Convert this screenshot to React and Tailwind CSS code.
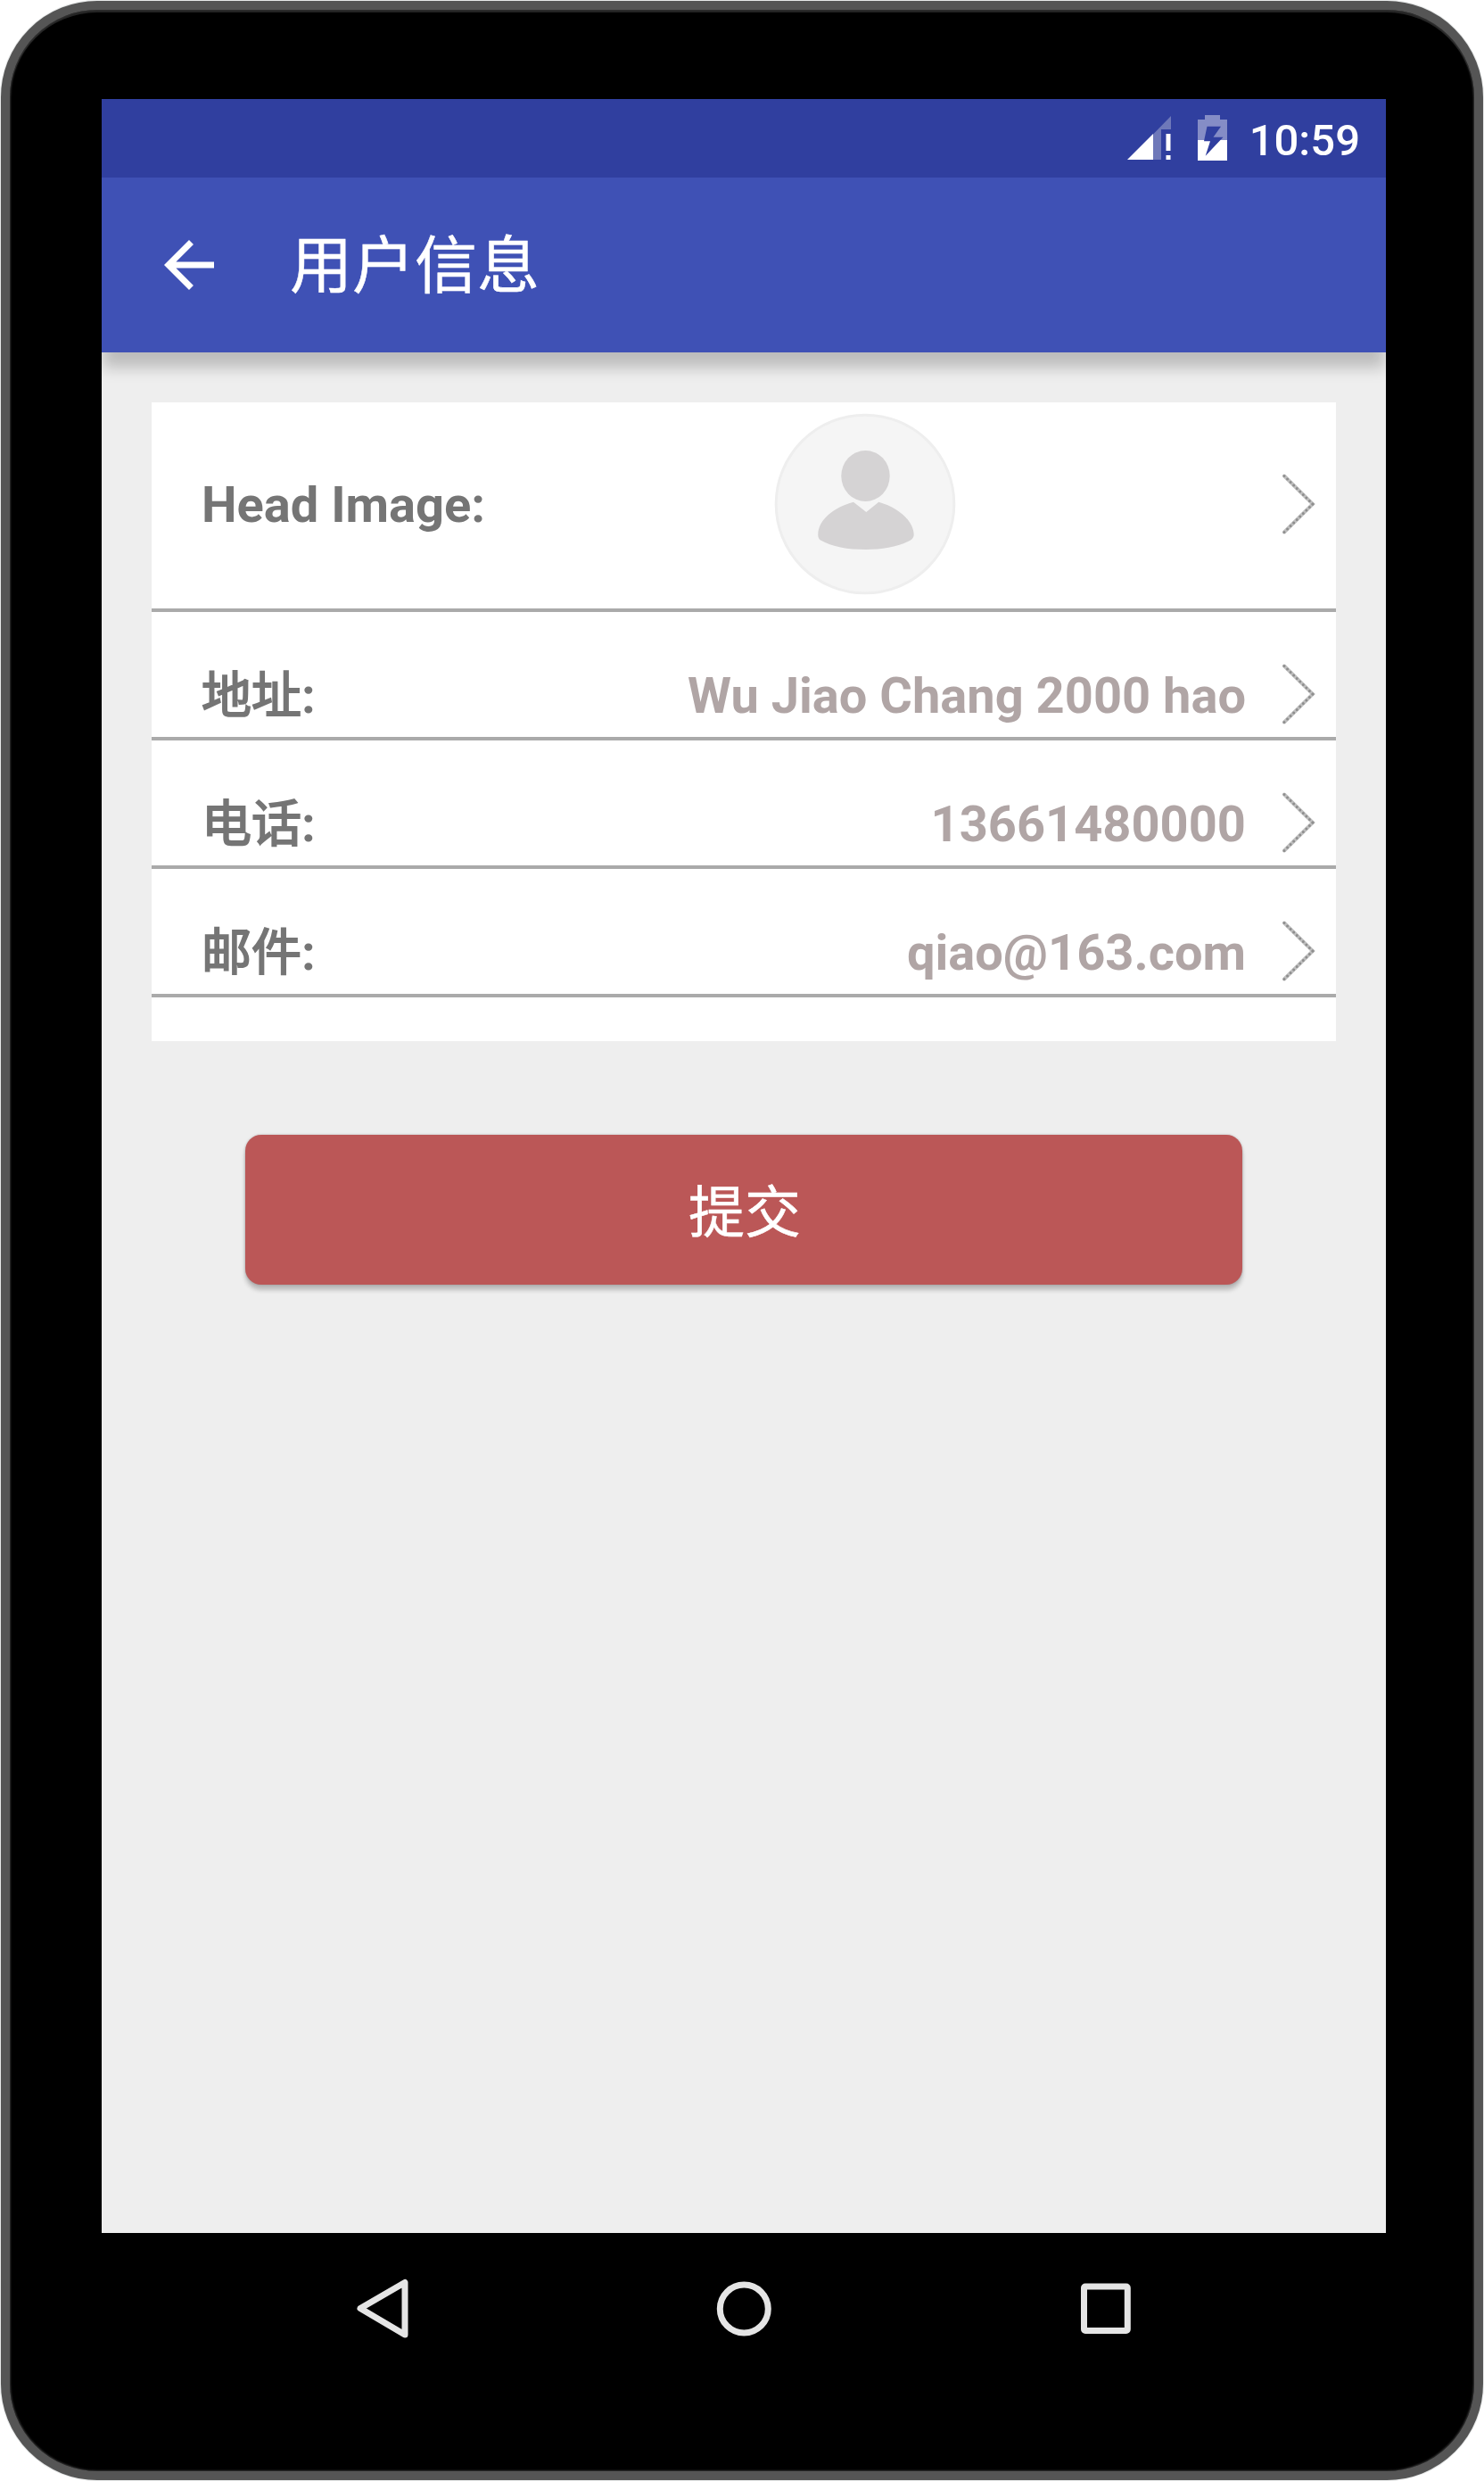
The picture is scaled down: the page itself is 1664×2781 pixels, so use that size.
import React from "react";

const FONT = "font-[Roboto,'Noto_Sans_CJK_SC',sans-serif]";

function SignalIcon() {
  return (
    <svg className="h-[52px] w-[50px]" viewBox="1264 129 50 52" aria-hidden="true">
      <path d="M1293 150.5 L1313 130 V145 H1302 V179 H1293Z" fill="#6e78b9" />
      <path d="M1264 179 L1293 150 V179Z" fill="#fff" />
      <path d="M1307.5 150h5v19h-5zM1307.5 174h5v5h-5z" fill="#fff" />
    </svg>
  );
}

function BatteryIcon() {
  return (
    <svg className="h-[52px] w-[33px]" viewBox="1343 129 33 52" aria-hidden="true">
      <path d="M1351 129h17v5h8v23h-33v-23h8z" fill="#858dc6" />
      <path d="M1343 157h33v23h-33z" fill="#fff" />
      <path d="M1353.5 141.7h15.5l-8.5 12h11L1351.7 174.7l5.3-16.4h-7z" fill="#303f9f" />
    </svg>
  );
}

function BackArrow() {
  return (
    <svg className="h-[84px] w-[84px]" viewBox="0 0 24 24" fill="#fff" aria-hidden="true">
      <path d="M20 11H7.83l5.59-5.59L12 4l-8 8 8 8 1.41-1.41L7.83 13H20v-2z" />
    </svg>
  );
}

function Chevron() {
  return (
    <svg className="h-[72px] w-[40px] shrink-0" viewBox="0 0 40 72" fill="none" strokeLinecap="round" aria-hidden="true">
      <path d="M4 4.5 L36 36 L4 67.5" stroke="#c0c0c0" strokeWidth="4" />
      <path d="M4 4.5 L36 36" stroke="#8e8e8e" strokeWidth="3" strokeDasharray="0 4.98" />
      <path d="M4 67.5 L36 36" stroke="#8e8e8e" strokeWidth="3" strokeDasharray="0 4.98" />
    </svg>
  );
}

function Avatar() {
  return (
    <svg className="h-[204px] w-[204px]" viewBox="868 463 204 204" aria-hidden="true">
      <circle cx="970" cy="565" r="99.8" fill="#f5f5f5" stroke="#eeeeee" strokeWidth="3" />
      <ellipse cx="970.5" cy="533.5" rx="27.2" ry="28.5" fill="#d5d3d4" />
      <path
        d="M957 562.7 L971.3 574 L985.3 562.7 C1008 569 1024 584 1024.7 599 Q1024.8 603 1021 605.5 C1008 613 990 616 971 616 C950 616 933 613 920 605.5 Q917 603.5 917.3 599 C917.5 583 934 569 957 562.7Z"
        fill="#d5d3d4"
      />
    </svg>
  );
}

function InfoRow({ label, value }) {
  return (
    <div className="flex h-36 items-start border-b-4 border-[#aaaaaa] pl-14 pr-[22px] pt-14">
      <span className="mt-[5px] whitespace-nowrap leading-[66px] text-[#757575]">
        <span className="font-normal [-webkit-text-stroke:1.9px_#757575]">{label}</span>:
      </span>
      <span className="mr-[39px] mt-[5px] flex-1 whitespace-nowrap text-right leading-[66px] text-[#b0a5a5]">{value}</span>
      <Chevron />
    </div>
  );
}

const rows = [
  { label: "地址", value: "Wu Jiao Chang 2000 hao" },
  { label: "电话", value: "13661480000" },
  { label: "邮件", value: "qiao@163.com" },
];

export default function App() {
  return (
    <div className={`h-[2781px] w-[1664px] bg-white p-px ${FONT}`}>
      <div className="flex h-[2779px] w-[1662px] flex-col items-center rounded-[108px] border-[10px] border-[#555555] bg-black pl-[4px] pt-[100px] shadow-[0_0_0_1px_#e6e8e8,inset_0_0_2px_1px_#333333,inset_0_3px_0_#222222]">
        <div className="flex h-[2392px] w-[1440px] flex-col overflow-hidden bg-[#eeeeee]">
          <div className="flex h-[88px] shrink-0 items-start justify-end bg-[#303f9f] pr-[29px] pt-[18px]">
            <SignalIcon />
            <div className="ml-[29px] flex">
              <BatteryIcon />
            </div>
            <span className="ml-[25px] text-[49px] font-medium leading-[58px] text-white">10:59</span>
          </div>

          <header className="flex h-[196px] shrink-0 items-center bg-[#3f51b5] pl-14 shadow-[0_18px_16px_-1px_rgba(0,0,0,0.21)]">
            <BackArrow />
            <h1 className="ml-[71px] mt-[4px] text-[70px] font-normal leading-[82px] text-white [-webkit-text-stroke:0.5px_#ffffff]">用户信息</h1>
          </header>

          <main className="flex flex-col px-14 pt-14">
            <section className="h-[716px] bg-white text-[56px] font-bold">
              <div className="flex h-[235px] items-center border-b-4 border-[#aaaaaa] pb-[3px] pl-14 pr-[22px]">
                <span className="w-[642px] whitespace-nowrap pt-[2px] leading-[66px] text-[#757575]">Head Image:</span>
                <Avatar />
                <div className="ml-auto">
                  <Chevron />
                </div>
              </div>
              {rows.map((row) => (
                <InfoRow key={row.label} label={row.label} value={row.value} />
              ))}
            </section>

            <button className="mt-[105px] flex h-[168px] w-[1118px] items-center justify-center self-center rounded-[18px] bg-[#bb5757] pl-[2px] pt-[7px] text-[63px] font-normal leading-[74px] text-white shadow-[0_6px_5px_rgba(0,0,0,0.22),0_0_3px_rgba(0,0,0,0.2)] [-webkit-text-stroke:0.5px_#ffffff]">
              提交
            </button>
          </main>
        </div>

        <nav className="flex h-[169px] w-[1440px] items-center pl-[285px] pt-px">
          <svg className="h-[70px] w-[60px]" viewBox="399 2553 60 70" fill="none" aria-hidden="true">
            <path d="M404 2587.5 L454 2558.5 V2617Z" stroke="#e5e5e5" strokeWidth="7" strokeLinejoin="round" />
          </svg>
          <svg className="ml-[343px] h-[64px] w-[64px]" viewBox="802 2555.5 64 64" fill="none" aria-hidden="true">
            <circle cx="834.3" cy="2587.5" r="27" stroke="#e5e5e5" strokeWidth="7" />
          </svg>
          <svg className="ml-[344px] h-[60px] w-[60px]" viewBox="1210 2557.5 60 60" fill="none" aria-hidden="true">
            <rect x="1215.5" y="2562.5" width="48.8" height="49.5" rx="1.5" stroke="#e5e5e5" strokeWidth="7" />
          </svg>
        </nav>
      </div>
    </div>
  );
}
